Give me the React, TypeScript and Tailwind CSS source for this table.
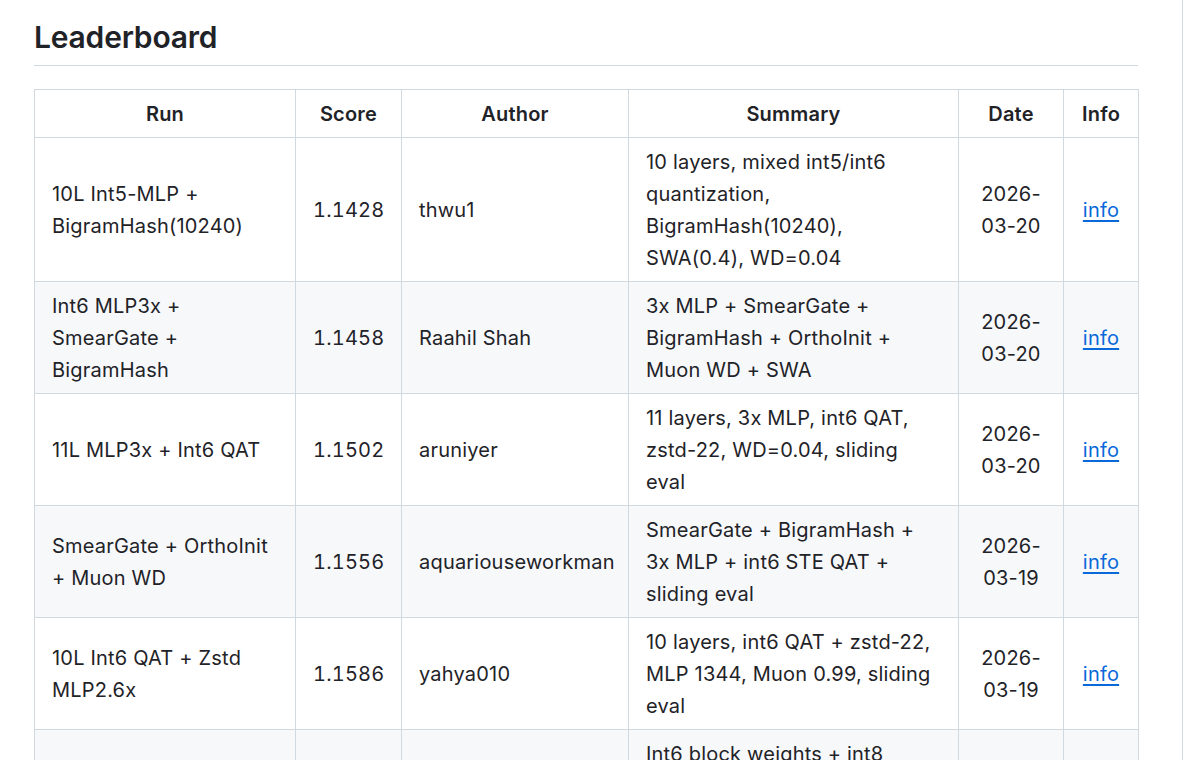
type Row = {
  run: string;
  score: string;
  author: string;
  summary: string;
  date: string;
};

const rows: Row[] = [
  {
    run: "10L Int5-MLP + BigramHash(10240)",
    score: "1.1428",
    author: "thwu1",
    summary: "10 layers, mixed int5/int6 quantization, BigramHash(10240), SWA(0.4), WD=0.04",
    date: "2026-03-20",
  },
  {
    run: "Int6 MLP3x + SmearGate + BigramHash",
    score: "1.1458",
    author: "Raahil Shah",
    summary: "3x MLP + SmearGate + BigramHash + OrthoInit + Muon WD + SWA",
    date: "2026-03-20",
  },
  {
    run: "11L MLP3x + Int6 QAT",
    score: "1.1502",
    author: "aruniyer",
    summary: "11 layers, 3x MLP, int6 QAT, zstd-22, WD=0.04, sliding eval",
    date: "2026-03-20",
  },
  {
    run: "SmearGate + OrthoInit + Muon WD",
    score: "1.1556",
    author: "aquariouseworkman",
    summary: "SmearGate + BigramHash + 3x MLP + int6 STE QAT + sliding eval",
    date: "2026-03-19",
  },
  {
    run: "10L Int6 QAT + Zstd MLP2.6x",
    score: "1.1586",
    author: "yahya010",
    summary: "10 layers, int6 QAT + zstd-22, MLP 1344, Muon 0.99, sliding eval",
    date: "2026-03-19",
  },
  {
    run: "Mixed Quant + Sliding Window Eval",
    score: "1.1630",
    author: "aquariouseworkman",
    summary: "Int6 block weights + int8 embeddings + 3x MLP + sliding eval",
    date: "2026-03-19",
  },
];

const cell = "border border-[#d1d9e0] px-[17px] py-[7.5px] align-middle";

export default function App() {
  return (
    <div className="h-[760px] overflow-hidden bg-white text-[#1f2328] font-['Inter','Liberation_Sans',sans-serif]">
      <div className="w-[1183px] min-h-full border-r border-[#d1d9e0] pl-[34px] pr-[44px] pt-[18px]">
        {/* Heading */}
        <h2 className="border-b border-[#d1d9e0] pb-[9px] text-[30px] font-semibold leading-[38px] tracking-[-0.2px]">
          Leaderboard
        </h2>

        {/* Table */}
        <table className="mt-[23px] w-[1104px] table-fixed border-collapse text-[20px] leading-8 tracking-[0.2px]">
          <colgroup>
            <col className="w-[261px]" />
            <col className="w-[106px]" />
            <col className="w-[227px]" />
            <col className="w-[330px]" />
            <col className="w-[105px]" />
            <col className="w-[75px]" />
          </colgroup>
          <thead>
            <tr className="bg-white">
              <th className={`${cell} text-center font-semibold`}>Run</th>
              <th className={`${cell} text-center font-semibold`}>Score</th>
              <th className={`${cell} text-center font-semibold`}>Author</th>
              <th className={`${cell} text-center font-semibold`}>Summary</th>
              <th className={`${cell} text-center font-semibold`}>Date</th>
              <th className={`${cell} text-center font-semibold`}>Info</th>
            </tr>
          </thead>
          <tbody>
            {rows.map((r, i) => (
              <tr key={r.score} className={i % 2 === 1 ? "bg-[#f6f8fa]" : "bg-white"}>
                <td className={cell}>{r.run}</td>
                <td className={`${cell} text-center tabular-nums`}>{r.score}</td>
                <td className={cell}>{r.author}</td>
                <td className={cell}>{r.summary}</td>
                <td className={`${cell} text-center`}>{r.date}</td>
                <td className={`${cell} text-center`}>
                  <a href="#" className="text-[#0969da] underline underline-offset-[3px]">
                    info
                  </a>
                </td>
              </tr>
            ))}
          </tbody>
        </table>
      </div>
    </div>
  );
}
